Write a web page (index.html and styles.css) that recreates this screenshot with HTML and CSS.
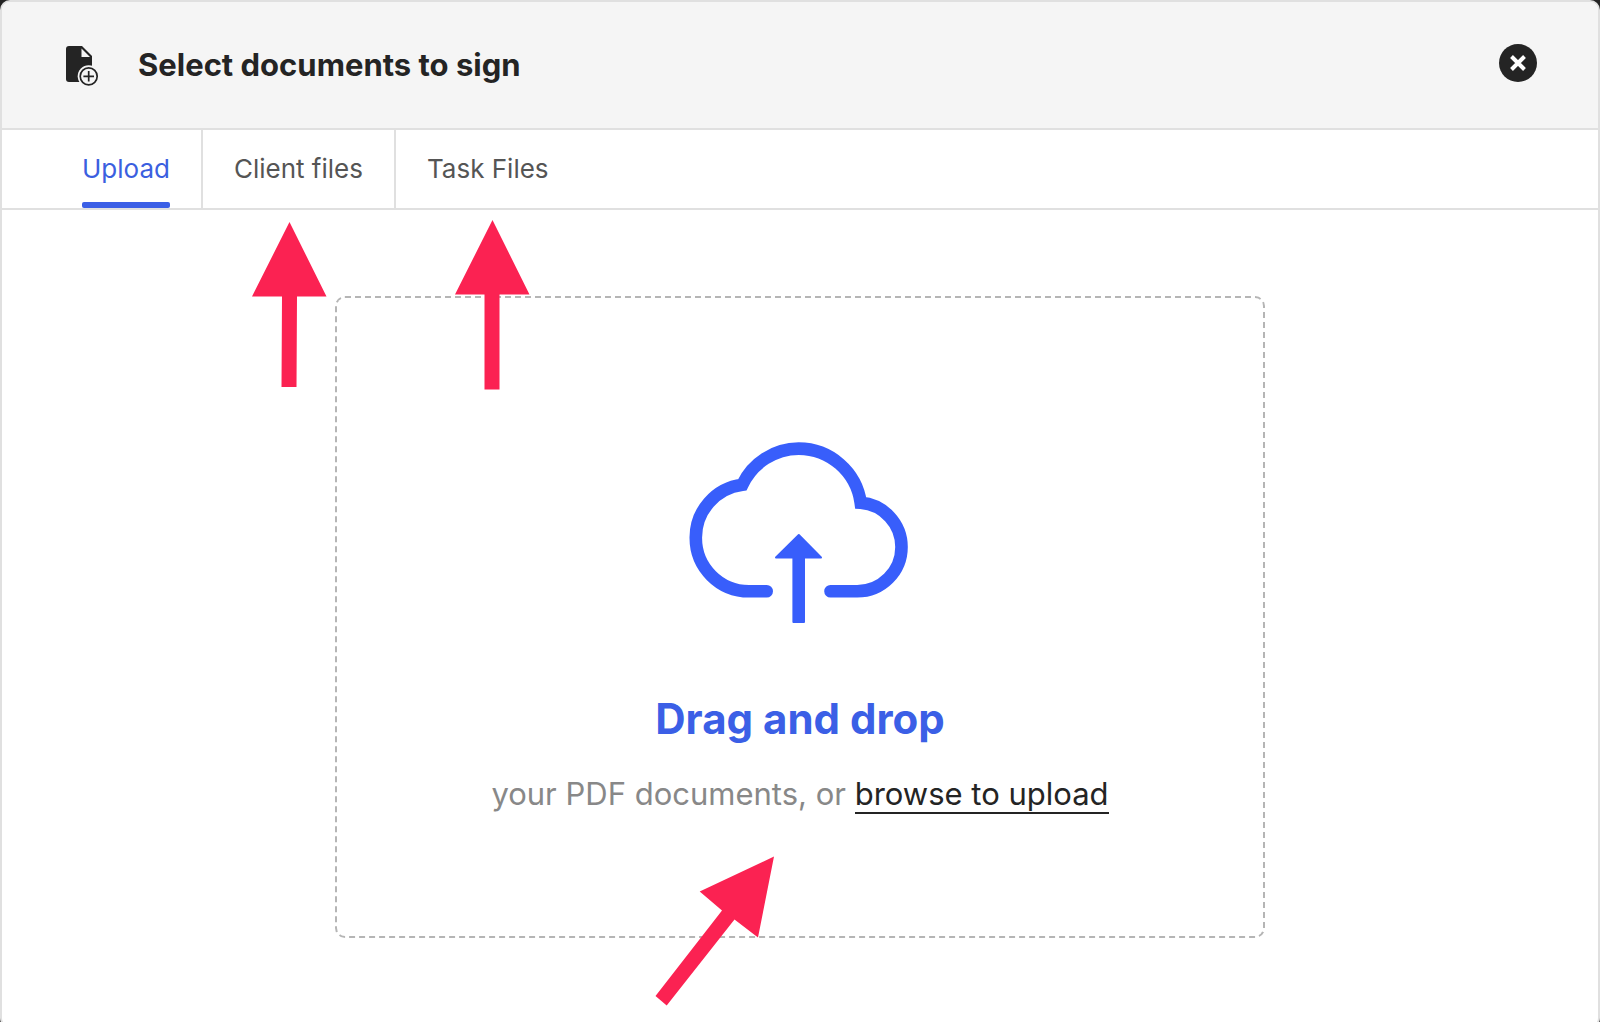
FILE: index.html
```html
<!DOCTYPE html>
<html lang="en">
<head>
	<meta charset="UTF-8">
	<meta name="viewport" content="width=device-width, initial-scale=1.0">
	<title>Select documents to sign</title>
	<link rel="stylesheet" href="styles.css">
</head>
<body>

	<div class="modal">
		<header class="modal-header">
			<svg class="file-icon" viewBox="0 0 34 42" aria-hidden="true">
				<path fill="#242424" d="M4 1H17L27 11V32A5 5 0 0 1 22 37H4A3 3 0 0 1 1 34V4A3 3 0 0 1 4 1Z"/>
				<path fill="#f5f5f5" d="M16.500 3.500V12H25Z"/>
				<circle cx="23.700" cy="31.300" r="11" fill="#f5f5f5"/>
				<circle cx="23.700" cy="31.300" r="8.500" fill="none" stroke="#242424" stroke-width="1.700"/>
				<path d="M23.700 26V36.600M18.400 31.300H29" stroke="#242424" stroke-width="1.700"/>
			</svg>
			<h1 class="modal-title">Select documents to sign</h1>
			<button class="close-button" type="button" aria-label="Close">
				<svg viewBox="0 0 38 38" aria-hidden="true">
					<path d="M12.500 12.500L25.500 25.500M25.500 12.500L12.500 25.500" stroke="#fff" stroke-width="4"/>
				</svg>
			</button>
		</header>

		<nav class="tabs">
			<div class="tab-item">
				<button class="tab-button active-tab" type="button">Upload</button>
			</div>
			<div class="tab-item">
				<button class="tab-button" type="button">Client files</button>
				<svg class="pointer pointer-client" viewBox="0 0 76 167" aria-hidden="true">
					<path d="M38.500 1L75.500 75.500H46L45.500 166H30.500L31 75.500H1Z"/>
				</svg>
			</div>
			<div class="tab-item">
				<button class="tab-button" type="button">Task Files</button>
				<svg class="pointer pointer-task" viewBox="0 0 76 171" aria-hidden="true">
					<path d="M38.500 1L75.500 75.500H45.500V170.500H30.500V75.500H1Z"/>
				</svg>
			</div>
		</nav>

		<main class="modal-body">
			<section class="dropzone">
				<svg class="cloud-icon" viewBox="0 0 260 220" aria-hidden="true">
					<path fill="none" stroke="#385efb" stroke-width="12.600" stroke-linecap="round" d="M96.700 171.300H79A53.200 53.200 0 0 1 25.800 118.100A53.200 53.200 0 0 1 72.300 64.700A62.800 62.800 0 0 1 128.700 28.600A62.800 62.800 0 0 1 190.700 82.800A44.300 44.300 0 0 1 231.500 127A44.300 44.300 0 0 1 187.200 171.300H160.500"/>
					<path fill="#385efb" stroke="#385efb" stroke-width="2" stroke-linejoin="round" d="M128.800 115L151 137.500H134V202H123.400V137.500H106Z"/>
				</svg>
				<h2 class="drop-title">Drag and drop</h2>
				<p class="drop-text">your PDF documents, or <a class="browse-link" href="#">browse to upload</a></p>
				<svg class="pointer pointer-browse" viewBox="0 0 120 152" aria-hidden="true">
					<path d="M119 1.500L103 82.500L79.500 64.500L11.700 150.500L0.500 141L67 55.500L44.700 36.500Z"/>
				</svg>
			</section>
		</main>
	</div>

</body>
</html>
```
FILE: styles.css
```css
* {
	box-sizing: border-box;
}

body {
	margin: 0;
	height: 100vh;
	overflow: hidden;
	background: #242424;
	font-family: Inter, "Liberation Sans", sans-serif;
	color: #242424;
}

.modal {
	min-height: calc(100vh + 6px);
	background: #fff;
	border: 2px solid #e0e0e0;
	border-radius: 10px;
	overflow: hidden;
}

/* Header */
.modal-header {
	display: flex;
	align-items: center;
	height: 128px;
	padding: 0 61px 0 63px;
	background: #f5f5f5;
	border-bottom: 2px solid #e0e0e0;
}

.file-icon {
	width: 34px;
	height: 42px;
	margin-top: 2px;
}

.modal-title {
	flex: 1;
	margin: 0 0 0 39px;
	font-size: 31px;
	line-height: 40px;
	font-weight: 700;
}

.close-button {
	width: 38px;
	height: 38px;
	margin-bottom: 4px;
	padding: 0;
	border: none;
	border-radius: 50%;
	background: #242424;
	cursor: pointer;
}

.close-button svg {
	display: block;
}

/* Tabs */
.tabs {
	display: flex;
	height: 80px;
	padding-left: 49px;
	border-bottom: 2px solid #e0e0e0;
}

.tab-item {
	position: relative;
	display: flex;
	padding: 0 31px;
}

.tab-item + .tab-item {
	border-left: 2px solid #e0e0e0;
}

.tab-button {
	position: relative;
	padding: 0;
	border: none;
	background: none;
	font-family: inherit;
	font-size: 26px;
	line-height: 36px;
	color: #555;
	cursor: pointer;
}

.active-tab {
	color: #3b5fe0;
}

.active-tab::after {
	content: "";
	position: absolute;
	left: 0;
	right: 0;
	bottom: 0;
	height: 6px;
	border-radius: 2px;
	background: #3b5fe6;
}

/* Upload area */
.modal-body {
	display: flex;
	justify-content: center;
	padding: 86px 32px;
}

.dropzone {
	position: relative;
	display: flex;
	flex-direction: column;
	align-items: center;
	width: 100%;
	max-width: 930px;
	padding: 122px 24px;
	border: 2px dashed #b5b5b5;
	border-radius: 10px;
}

.cloud-icon {
	width: 260px;
	height: 220px;
}

.drop-title {
	margin: 54px 0 30px;
	font-size: 42px;
	line-height: 50px;
	font-weight: 700;
	color: #3b5fe6;
}

.drop-text {
	margin: 0;
	font-size: 31px;
	line-height: 40px;
	color: #888;
}

.browse-link {
	color: #242424;
	text-decoration: none;
	border-bottom: 2px solid #242424;
}

/* Red pointers laid over the page */
.pointer {
	position: absolute;
	z-index: 1;
	fill: #fb2252;
	pointer-events: none;
}

.pointer-client {
	top: 91px;
	left: 48px;
	width: 76px;
	height: 167px;
}

.pointer-task {
	top: 89px;
	left: 58px;
	width: 76px;
	height: 171px;
}

.pointer-browse {
	bottom: -71px;
	left: 318px;
	width: 120px;
	height: 152px;
}
```
